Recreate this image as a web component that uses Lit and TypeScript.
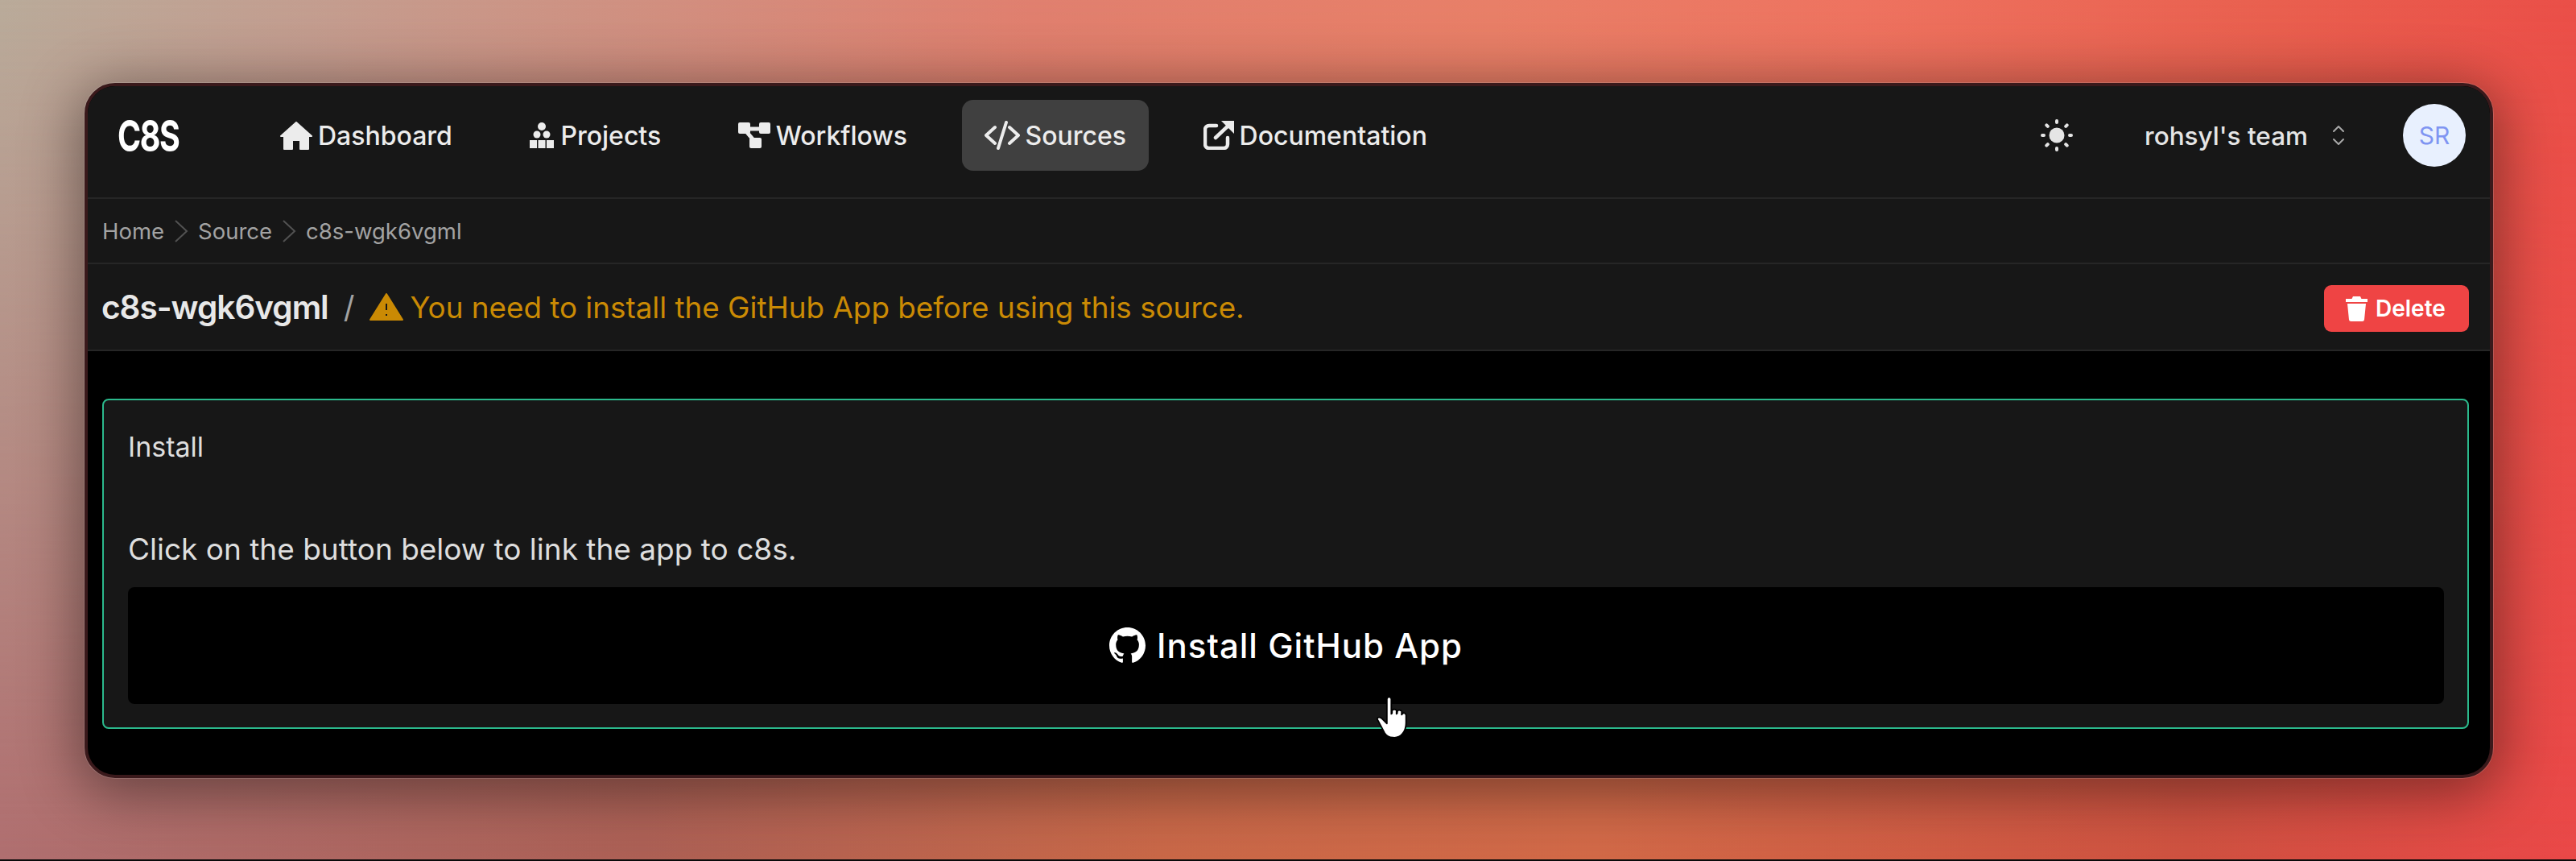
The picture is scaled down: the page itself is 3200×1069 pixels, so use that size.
import { LitElement, html, css, svg } from 'lit';
import { customElement } from 'lit/decorators.js';

const navItems = [
  {
    label: 'Dashboard',
    icon: svg`<svg class="ico home" viewBox="0 0 40 35"><path fill="currentColor" stroke="currentColor" stroke-width="2" stroke-linejoin="round" d="M20 1 39 18H35V34H25V23H15V34H5V18H1Z"/></svg>`,
  },
  {
    label: 'Projects',
    icon: svg`<svg class="ico proj" viewBox="0 0 32 32"><circle cx="16" cy="5" r="5" fill="currentColor"/><circle cx="10" cy="15" r="4.500" fill="currentColor"/><circle cx="22" cy="15" r="4.500" fill="currentColor"/><path fill="currentColor" d="M1 22h9v10H1zM11.500 22h9v10h-9zM22 22h9v10h-9z"/></svg>`,
  },
  {
    label: 'Workflows',
    icon: svg`<svg class="ico flow" viewBox="0 0 40 32"><rect width="15" height="14" rx="2" fill="currentColor"/><rect x="26" width="14" height="14" rx="2" fill="currentColor"/><rect x="14" y="19" width="15" height="13" rx="2" fill="currentColor"/><path fill="none" stroke="currentColor" stroke-width="5" d="M12 8h16M9 10l11 13"/></svg>`,
  },
  {
    label: 'Sources',
    active: true,
    icon: svg`<svg class="ico code" viewBox="0 0 44 36"><path fill="none" stroke="currentColor" stroke-width="4" stroke-linecap="round" stroke-linejoin="round" d="M13 8 2 18l11 10M31 8l11 10-11 10M27 2 17 34"/></svg>`,
  },
  {
    label: 'Documentation',
    icon: svg`<svg class="ico doc" viewBox="0 0 38 36"><path fill="none" stroke="currentColor" stroke-width="4.500" stroke-linecap="round" stroke-linejoin="round" d="M16 6H7a5 5 0 0 0-5 5v18a5 5 0 0 0 5 5h18a5 5 0 0 0 5-5V21M15 21 32 5"/><path fill="currentColor" d="M22 0h16v16z"/></svg>`,
  },
];

@customElement('app-root')
export class AppRoot extends LitElement {
  static styles = css`
    :host {
      display: block;
      font-family: Inter, 'Liberation Sans', sans-serif;
      color: #e5e5e5;
    }
    .stage {
      position: relative;
      box-sizing: border-box;
      width: 3200px;
      height: 1069px;
      padding: 103px 103px 0 105px;
      border-bottom: 2px solid #0a0a0a;
      background: linear-gradient(90deg, #b06f70 0%, #ad6055 25%, #c96848 45%, #d26a48 62%, #cf5241 85%, #ea4848 100%);
    }
    .stage::before {
      content: '';
      position: absolute;
      inset: 0;
      background: linear-gradient(90deg, #b9ab9a 0%, #c39e90 12%, #e0806f 40%, #e87f68 58%, #ee7360 72%, #e9604f 88%, #ea4f48 100%);
      -webkit-mask-image: linear-gradient(180deg, #000 0%, transparent 100%);
      mask-image: linear-gradient(180deg, #000 0%, transparent 100%);
    }
    .window {
      position: relative;
      box-sizing: border-box;
      height: 863px;
      display: flex;
      flex-direction: column;
      background: #000;
      border: 4px solid #3a191b;
      border-radius: 38px;
      box-shadow: 0 0 0 1px rgba(255, 255, 255, 0.14), 0 12px 70px 8px rgba(0, 0, 0, 0.42);
      overflow: hidden;
    }
    .bar {
      display: flex;
      align-items: center;
      background: #171717;
      border-bottom: 2px solid #262626;
      box-sizing: border-box;
      flex: none;
    }
    .nav {
      height: 140px;
      padding: 0 30px 16px 37px;
    }
    .logo {
      width: 174px;
      flex: none;
      font-size: 54px;
      font-weight: 700;
      letter-spacing: -2px;
      color: #fff;
      transform: scaleX(0.73);
      transform-origin: left center;
    }
    .links {
      display: flex;
      gap: 39.500px;
    }
    .link {
      display: flex;
      align-items: center;
      gap: 7px;
      height: 88px;
      padding: 0 28px;
      border-radius: 14px;
      font-size: 32px;
      font-weight: 500;
      color: #ececec;
    }
    .link.active {
      background: #404040;
    }
    .ico {
      display: block;
      flex: none;
    }
    .home {
      width: 40px;
      height: 35px;
    }
    .proj {
      width: 32px;
      height: 32px;
    }
    .flow {
      width: 40px;
      height: 32px;
    }
    .code {
      width: 44px;
      height: 36px;
    }
    .doc {
      width: 38px;
      height: 36px;
    }
    .right {
      margin-left: auto;
      display: flex;
      align-items: center;
    }
    .sun {
      width: 40px;
      height: 40px;
      color: #e5e5e5;
    }
    .team {
      margin-left: 89px;
      font-size: 31.500px;
      font-weight: 500;
    }
    .updown {
      width: 16px;
      height: 26px;
      margin-left: 30px;
      color: #a8a8a8;
    }
    .avatar {
      width: 78px;
      height: 78px;
      margin-left: 72px;
      border-radius: 50%;
      background: #e8f0fe;
      color: #7f95f2;
      display: flex;
      align-items: center;
      justify-content: center;
      font-size: 30px;
    }
    .crumbs {
      height: 81px;
      padding: 0 18px;
      gap: 10px;
      font-size: 27.500px;
      color: #a3a3a3;
    }
    .chev {
      width: 22px;
      height: 32px;
      color: #525252;
    }
    .head {
      height: 108px;
      padding: 0 26px 0 17px;
    }
    .name {
      font-size: 40.500px;
      font-weight: 600;
      letter-spacing: -1px;
      color: #e8e8e8;
    }
    .slash {
      margin: 0 19px;
      font-size: 38px;
      color: #a3a3a3;
    }
    .warn {
      width: 42px;
      height: 34px;
      margin-right: 8px;
      color: #ca8a04;
    }
    .warning {
      font-size: 36.800px;
      color: #ca8a04;
    }
    .delete {
      margin-left: auto;
      margin-top: 4px;
      display: flex;
      align-items: center;
      gap: 10px;
      height: 58px;
      width: 180px;
      box-sizing: border-box;
      padding-left: 27px;
      background: #ef4444;
      border-radius: 9px;
      font-size: 28px;
      font-weight: 600;
      color: #fff;
    }
    .trash {
      width: 27px;
      height: 31px;
    }
    .main {
      flex: 1;
      padding: 59px 26px 57px 18px;
    }
    .card {
      box-sizing: border-box;
      height: 410px;
      display: flex;
      flex-direction: column;
      padding: 0 29px 29px 30px;
      background: #171717;
      border: 2px solid #2bb98c;
      border-radius: 8px;
    }
    .title {
      margin-top: 38px;
      font-size: 34px;
      line-height: 40px;
      color: #dedede;
    }
    .desc {
      margin-top: 85px;
      font-size: 37px;
      line-height: 44px;
      color: #dedede;
    }
    .install {
      flex: 1;
      margin-top: 25px;
      display: flex;
      align-items: center;
      justify-content: center;
      gap: 14px;
      background: #000;
      border-radius: 8px;
      font-size: 42px;
      font-weight: 500;
      letter-spacing: 1px;
      color: #fff;
    }
    .gh {
      width: 45px;
      height: 45px;
    }
    .pointer {
      position: absolute;
      left: 1710px;
      top: 864px;
      width: 44px;
      height: 54px;
    }
  `;

  render() {
    return html`
      <div class="stage">
        <div class="window">
          <div class="bar nav">
            <div class="logo">C8S</div>
            <div class="links">
              ${navItems.map(
                (n) => html`<div class="link ${n.active ? 'active' : ''}">${n.icon}<span>${n.label}</span></div>`
              )}
            </div>
            <div class="right">
              <svg class="ico sun" viewBox="0 0 40 40">
                <circle cx="20" cy="20" r="9.500" fill="currentColor" />
                <path
                  fill="none"
                  stroke="currentColor"
                  stroke-width="4"
                  stroke-linecap="round"
                  d="M20 2v2M20 36v2M2 20h2M36 20h2M7.300 7.300l1.500 1.500M31.200 31.200l1.500 1.500M7.300 32.700l1.500-1.500M31.200 8.800l1.500-1.500"
                />
              </svg>
              <span class="team">rohsyl's team</span>
              <svg class="ico updown" viewBox="0 0 16 26">
                <path
                  fill="none"
                  stroke="currentColor"
                  stroke-width="2"
                  stroke-linecap="round"
                  stroke-linejoin="round"
                  d="M2 8l6-6 6 6M2 18l6 6 6-6"
                />
              </svg>
              <div class="avatar">SR</div>
            </div>
          </div>
          <div class="bar crumbs">
            <span>Home</span>
            <svg class="ico chev" viewBox="0 0 22 32"><path fill="none" stroke="currentColor" stroke-width="2" d="M4 3l14 13L4 29" /></svg>
            <span>Source</span>
            <svg class="ico chev" viewBox="0 0 22 32"><path fill="none" stroke="currentColor" stroke-width="2" d="M4 3l14 13L4 29" /></svg>
            <span>c8s-wgk6vgml</span>
          </div>
          <div class="bar head">
            <span class="name">c8s-wgk6vgml</span>
            <span class="slash">/</span>
            <svg class="ico warn" viewBox="0 0 42 34">
              <path
                fill="currentColor"
                stroke="currentColor"
                stroke-width="2"
                stroke-linejoin="round"
                fill-rule="evenodd"
                d="M21 1 41 33H1ZM19 12v10h4V12ZM19 25v4h4v-4Z"
              />
            </svg>
            <span class="warning">You need to install the GitHub App before using this source.</span>
            <div class="delete">
              <svg class="ico trash" viewBox="0 0 27 31">
                <path fill="currentColor" d="M9 0h9l1.500 3H27v4H0V3h7.500ZM2 9h23l-2 20q-.2 2-2.500 2h-14q-2.300 0-2.500-2Z" />
              </svg>
              <span>Delete</span>
            </div>
          </div>
          <div class="main">
            <div class="card">
              <div class="title">Install</div>
              <div class="desc">Click on the button below to link the app to c8s.</div>
              <div class="install">
                <svg class="ico gh" viewBox="0 0 16 16">
                  <path
                    fill="currentColor"
                    d="M8 0C3.580 0 0 3.580 0 8c0 3.540 2.290 6.530 5.470 7.590.4.070.55-.17.55-.38 0-.19-.01-.82-.01-1.490-2.010.37-2.530-.49-2.690-.94-.09-.23-.48-.94-.82-1.130-.28-.15-.68-.52-.01-.53.63-.01 1.080.58 1.230.82.72 1.210 1.870.87 2.330.66.070-.52.28-.87.51-1.070-1.780-.2-3.640-.89-3.640-3.950 0-.87.31-1.590.82-2.150-.08-.2-.36-1.020.08-2.120 0 0 .67-.21 2.200.82.64-.18 1.320-.27 2-.27.68 0 1.360.09 2 .27 1.530-1.040 2.200-.82 2.200-.82.44 1.100.16 1.920.08 2.120.51.56.82 1.270.82 2.150 0 3.070-1.870 3.750-3.650 3.950.29.25.54.73.54 1.480 0 1.070-.01 1.930-.01 2.200 0 .21.15.46.55.38A8.013 8.013 0 0 0 16 8c0-4.420-3.580-8-8-8z"
                  />
                </svg>
                <span>Install GitHub App</span>
              </div>
            </div>
          </div>
        </div>
        <svg class="pointer" viewBox="0 0 48 58">
          <path
            fill="#fff"
            stroke="#000"
            stroke-width="2"
            stroke-linejoin="round"
            d="M14 4q0-3 3-3t3 3v20l1-1v-3q1-3 4-2t2 3v3l1-1v-2q1-3 4-2t2 3v3l1-1q1-2 3-1t2 3v10q0 9-5 15t-13 5q-7 0-11-6L2 33q-2-3 0-4t5 1l7 7z"
          />
        </svg>
      </div>
    `;
  }
}
